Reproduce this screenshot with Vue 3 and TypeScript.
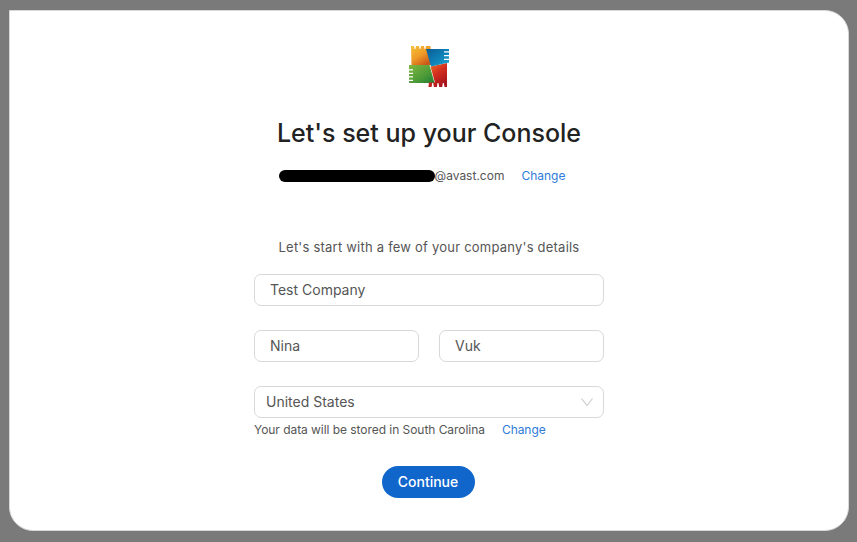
<script setup lang="ts">
const company: string = "Test Company";
const firstName: string = "Nina";
const lastName: string = "Vuk";
const country: string = "United States";
</script>

<template>
  <div class="backdrop">
    <main class="card">
      <svg class="logo" width="42" height="44" viewBox="408 45 42 44" role="img" aria-label="AVG logo">
        <defs>
          <linearGradient id="og" x1="0" y1="0" x2="0.7" y2="1">
            <stop offset="0" stop-color="#f6c23c" />
            <stop offset="0.55" stop-color="#ee9a26" />
            <stop offset="1" stop-color="#c9561a" />
          </linearGradient>
          <linearGradient id="bl" x1="0" y1="0" x2="1" y2="1">
            <stop offset="0" stop-color="#0b5c94" />
            <stop offset="0.6" stop-color="#0f86bb" />
            <stop offset="1" stop-color="#22a9d6" />
          </linearGradient>
          <linearGradient id="gr" x1="0" y1="0" x2="1" y2="1">
            <stop offset="0" stop-color="#82b73f" />
            <stop offset="0.6" stop-color="#4c9a38" />
            <stop offset="1" stop-color="#1f7d33" />
          </linearGradient>
          <linearGradient id="rd" x1="0" y1="0" x2="0.6" y2="1">
            <stop offset="0" stop-color="#ee7a22" />
            <stop offset="0.5" stop-color="#d4301f" />
            <stop offset="1" stop-color="#a9141d" />
          </linearGradient>
        </defs>
        <path fill="url(#og)" d="M411 46h3l.5 3 .9 0 .6-3h3l.5 3 .9 0 .6-3h3l.5 3 .9 0 .6-3h4.500l1 19h-20z" />
        <path fill="url(#gr)" d="M409 65h20.500l5 18h-25.500v-2h4v-1.300h-4v-2.200h4v-1.300h-4v-2.200h4v-1.300h-4v-2.200h4v-1.300h-4z" />
        <path fill="url(#rd)" d="M430.500 66.500l16.500-3.500v24h-2.500l-.7-4h-1l-.6 4h-3l-.7-4h-1l-.6 4h-3l-.7-4h-1l-.6 4h-3.100l.4-4.500h6z" />
        <path fill="url(#bl)" d="M426 49h23v2.300h-5v1.300h5v2.400h-5v1.300h5v2.400h-5v1.300h5v2.500l-18 3.900z" />
      </svg>
      <h1 class="title">Let's set up your Console</h1>
      <div class="account">
        <span class="mask"></span><span class="domain">@avast.com</span>
        <a class="link account-link">Change</a>
      </div>
      <p class="lead">Let's start with a few of your company's details</p>
      <form class="form" @submit.prevent>
        <div class="field">{{ company }}</div>
        <div class="names">
          <div class="field">{{ firstName }}</div>
          <div class="field">{{ lastName }}</div>
        </div>
        <div class="field select">
          <span>{{ country }}</span>
          <svg width="12" height="8" viewBox="0 0 12 8" fill="none" stroke="#c9cbcd" stroke-width="1.1">
            <path d="M0.500 0.500l5.500 7 5.500-7" />
          </svg>
        </div>
        <div class="storage">
          <span>Your data will be stored in South Carolina</span>
          <a class="link storage-link">Change</a>
        </div>
        <button class="continue" type="submit">Continue</button>
      </form>
    </main>
  </div>
</template>

<style>
html, body { margin: 0; background: #7a7a7a; }
</style>

<style scoped>
.backdrop {
  width: 857px;
  height: 542px;
  box-sizing: border-box;
  padding: 10px 8px 11px 9px;
  background: #7a7a7a;
  font-family: Inter, "Noto Sans", sans-serif;
  color: #555;
}
.card {
  box-sizing: border-box;
  height: 521px;
  background: #fff;
  border: 1px solid #d8d8d8;
  border-radius: 0 24px 24px 24px;
  display: flex;
  flex-direction: column;
  align-items: center;
  padding-top: 34px;
}
.logo { display: block; }
.title {
  margin: 27px 0 0;
  font-size: 25px;
  line-height: 34px;
  font-weight: 500;
  color: #222;
}
.account {
  margin: 18px 14px 0 0;
  display: flex;
  align-items: center;
  font-size: 12px;
  line-height: 16px;
}
.mask {
  width: 156px;
  height: 12px;
  background: #000;
  border-radius: 6px;
}
.link { color: #2f7bd8; cursor: pointer; }
.account-link { margin-left: 17px; }
.lead {
  margin: 53px 0 0;
  font-size: 13px;
  line-height: 20px;
  letter-spacing: 0.22px;
}
.form {
  width: 350px;
  margin-top: 17px;
  display: flex;
  flex-direction: column;
}
.field {
  box-sizing: border-box;
  height: 32px;
  border: 1px solid #d8d8d8;
  border-radius: 7px;
  padding: 0 15px 2px;
  display: flex;
  align-items: center;
  font-size: 14px;
}
.names {
  margin-top: 24px;
  display: grid;
  grid-template-columns: 165px 165px;
  gap: 20px;
}
.select {
  margin-top: 24px;
  padding: 0 10px 1px 11px;
  justify-content: space-between;
}
.storage {
  margin-top: 4px;
  font-size: 12px;
  line-height: 16px;
  letter-spacing: -0.05px;
}
.storage-link { margin-left: 17px; }
.continue {
  align-self: center;
  margin: 28px 2px 0 0;
  width: 93px;
  height: 32px;
  padding: 0 0 2px;
  border: 0;
  border-radius: 16px;
  background: #1166cc;
  color: #fff;
  font: 500 14px Inter, "Noto Sans", sans-serif;
}
</style>
